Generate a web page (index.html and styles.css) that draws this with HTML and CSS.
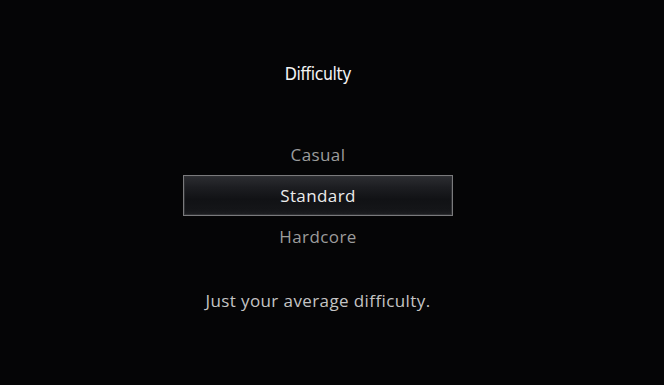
FILE: index.html
```html
<!DOCTYPE html>
<html lang="en">
<head>
<meta charset="utf-8">
<title>Difficulty</title>
<link rel="stylesheet" href="styles.css">
</head>
<body>
<main class="menu">
  <h1 class="title">Difficulty</h1>
  <ul class="options">
    <li class="option">Casual</li>
    <li class="option selected">Standard</li>
    <li class="option">Hardcore</li>
  </ul>
  <p class="description">Just your average difficulty.</p>
</main>
</body>
</html>
```
FILE: styles.css
```css
html, body {
  margin: 0;
  padding: 0;
  background: #050506;
  height: 100%;
}
body {
  font-family: "Open Sans", "Noto Sans", sans-serif;
}
.menu {
  display: flex;
  flex-direction: column;
  width: 270px;
  padding: 64px 0 0 183px;
}
.title {
  margin: 0;
  font-family: "DejaVu Sans Condensed", "DejaVu Sans", sans-serif;
  font-stretch: condensed;
  font-weight: normal;
  font-size: 17.5px;
  letter-spacing: -0.4px;
  line-height: 21px;
  color: #f4f4f4;
  text-align: center;
}
.options {
  list-style: none;
  margin: 49px 0 0;
  padding: 0;
  display: flex;
  flex-direction: column;
}
.option {
  height: 41px;
  box-sizing: border-box;
  display: flex;
  align-items: center;
  justify-content: center;
  font-size: 17px;
  font-weight: 500;
  letter-spacing: 0.4px;
  line-height: 23px;
  color: #9c9c9c;
}
.selected {
  color: #ececec;
  border: 1px solid #7a7a7c;
  box-shadow: inset 0 0 0 1px #2e2f32;
  background: linear-gradient(to bottom, #2c2d31 0%, #1c1d21 30%, #111215 60%, #141518 85%, #1d1e21 100%);
}
.description {
  margin: 32px 0 0;
  font-size: 17px;
  font-weight: 500;
  letter-spacing: 0.4px;
  line-height: 24px;
  color: #c4c4c4;
  text-align: center;
}
```
